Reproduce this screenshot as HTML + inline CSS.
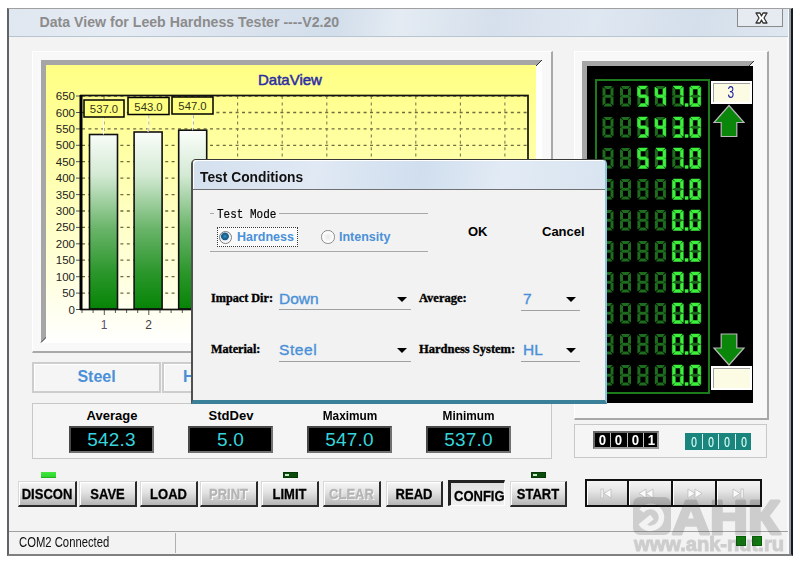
<!DOCTYPE html>
<html><head><meta charset="utf-8">
<style>
*{margin:0;padding:0;box-sizing:border-box}
html,body{width:800px;height:565px;overflow:hidden;background:#fff;font-family:"Liberation Sans",sans-serif}
.a{position:absolute}
#win{left:7px;top:8px;width:786px;height:548px;background:#f3f3f3;border-left:2px solid #606468;border-top:1px solid #a0a0a0;border-right:2px solid #151a20;border-bottom:2px solid #808080;box-shadow:inset -2px 0 0 #9aa0a6,inset -4px 0 0 #fafafa}
#title{left:9px;top:9px;width:779px;height:28px;background:linear-gradient(100deg,#dfe7f0 0%,#e6ecf4 15%,#dae3ee 30%,#d2deeb 42%,#e4ebf3 50%,#d6e0ec 62%,#dfe7f1 75%,#d4dfeb 88%,#dfe7f0 100%);border-bottom:1px solid #b8c4d0}
#title span{position:absolute;left:30.5px;top:5px;font-size:14.15px;font-weight:bold;color:#8c8c8c;white-space:nowrap}
#close{left:737px;top:9px;width:46px;height:18px;border:1px solid #8a8a8a;border-top:none;background:#e6ebf1}
.frame{background:#f8f8f8;border-top:1px solid #fff;border-left:1px solid #fff;border-right:2px solid #a8a8a8;border-bottom:2px solid #a8a8a8}
.pan{background:#f5f5f5;border:1px solid #c8c8c8}
.lbl{font-size:13px;font-weight:bold;color:#000;text-align:center;white-space:nowrap}
.stat{background:#000;border:2px solid #484848;border-right-color:#707070;border-bottom-color:#707070;color:#36d4dc;font-size:19px;text-align:center;line-height:23px;letter-spacing:0.2px}
.btn{height:26px;background:linear-gradient(#f6f6f6,#e2e2e2 45%,#b6b6b6);border-top:1px solid #d8d8d8;border-left:1px solid #d8d8d8;border-right:2px solid #2a2a2a;border-bottom:2px solid #2a2a2a;box-shadow:inset 1px 1px 0 #fff;font-size:13px;font-weight:bold;text-align:center;line-height:24px;color:#000}
.btn span{display:inline-block;transform:scaleY(1.18);-webkit-text-stroke:0.25px #000}
.dis span{-webkit-text-stroke:0.25px #b4b4b4;text-shadow:1px 1px 0 #fff}
.prs{background:linear-gradient(#e0e0e0,#f0f0f0);border-top:3px solid #222;border-left:3px solid #222;border-right:1px solid #fff;border-bottom:1px solid #fff;box-shadow:none}
.dis{color:#b4b4b4}
.cnt{width:15px;height:18px;font-size:15px;font-weight:bold;text-align:center;line-height:18px;transform:scaleX(0.88)}
.cnt2{width:16px;height:17px;font-size:14px;text-align:center;line-height:18px;color:#d8fff8;transform:scaleX(0.72);-webkit-text-stroke:0.2px #d8fff8}
.navb{height:24px;background:linear-gradient(#f4f4f4,#e6e6e6 40%,#bcbcbc);border-left:1px solid #fff}
</style></head><body>
<div id="win" class="a"></div>
<div id="title" class="a"><span>Data View for Leeb Hardness Tester ----V2.20</span></div>
<div id="close" class="a"><svg width="46" height="18" style="position:absolute;left:0;top:0"><path d="M18 4 L22 4 L23.5 7 L25 4 L29 4 L26 9 L29 14 L25 14 L23.5 11 L22 14 L18 14 L21 9 Z" fill="#fff" stroke="#333" stroke-width="1.3" stroke-linejoin="round"/></svg></div>

<!-- chart frame -->
<div class="a frame" style="left:32px;top:51px;width:521px;height:302px"></div>
<div class="a" style="left:41px;top:60px;width:501px;height:283px;background:#fff"></div>
<svg class="a" style="left:0;top:0" width="800" height="565"><polygon points="41,60 542,60 536.5,65.5 46.5,65.5 46.5,337 41,342.5" fill="#a6a6a6"/><line x1="536" y1="66" x2="542" y2="60" stroke="#333" stroke-width="1"/><line x1="41" y1="342.5" x2="46.5" y2="337" stroke="#333" stroke-width="1"/></svg>
<div class="a" style="left:46px;top:65px;width:490px;height:278px;background:linear-gradient(#ffff84 0%,#ffff90 12%,#ffffa4 30%,#ffffc4 55%,#ffffe4 80%,#ffffff 100%)"></div>
<div class="a" style="left:258px;top:71px;font-size:15px;color:#2c2ca4;-webkit-text-stroke:0.5px #2c2ca4">DataView</div>
<svg class="a" style="left:0;top:0" width="800" height="565">
<defs><linearGradient id="bg" x1="0" y1="0" x2="0" y2="1"><stop offset="0" stop-color="#ffff78"/><stop offset="0.25" stop-color="#ffff90"/><stop offset="0.55" stop-color="#ffffc0"/><stop offset="0.85" stop-color="#fffff0"/><stop offset="1" stop-color="#ffffff"/></linearGradient>
<linearGradient id="bar" gradientUnits="userSpaceOnUse" x1="0" y1="130" x2="0" y2="309"><stop offset="0" stop-color="#fcfefc"/><stop offset="0.25" stop-color="#d4ead4"/><stop offset="0.55" stop-color="#6ab46a"/><stop offset="0.8" stop-color="#2a962a"/><stop offset="1" stop-color="#068406"/></linearGradient></defs>
<line x1="82" y1="293.1" x2="527" y2="293.1" stroke="#6c6c3c" stroke-width="1.3" stroke-dasharray="3,3.4"/>
<line x1="82" y1="276.7" x2="527" y2="276.7" stroke="#6c6c3c" stroke-width="1.3" stroke-dasharray="3,3.4"/>
<line x1="82" y1="260.2" x2="527" y2="260.2" stroke="#6c6c3c" stroke-width="1.3" stroke-dasharray="3,3.4"/>
<line x1="82" y1="243.8" x2="527" y2="243.8" stroke="#6c6c3c" stroke-width="1.3" stroke-dasharray="3,3.4"/>
<line x1="82" y1="227.4" x2="527" y2="227.4" stroke="#6c6c3c" stroke-width="1.3" stroke-dasharray="3,3.4"/>
<line x1="82" y1="211.0" x2="527" y2="211.0" stroke="#6c6c3c" stroke-width="1.3" stroke-dasharray="3,3.4"/>
<line x1="82" y1="194.6" x2="527" y2="194.6" stroke="#6c6c3c" stroke-width="1.3" stroke-dasharray="3,3.4"/>
<line x1="82" y1="178.1" x2="527" y2="178.1" stroke="#6c6c3c" stroke-width="1.3" stroke-dasharray="3,3.4"/>
<line x1="82" y1="161.7" x2="527" y2="161.7" stroke="#6c6c3c" stroke-width="1.3" stroke-dasharray="3,3.4"/>
<line x1="82" y1="145.3" x2="527" y2="145.3" stroke="#6c6c3c" stroke-width="1.3" stroke-dasharray="3,3.4"/>
<line x1="82" y1="128.9" x2="527" y2="128.9" stroke="#6c6c3c" stroke-width="1.3" stroke-dasharray="3,3.4"/>
<line x1="82" y1="112.5" x2="527" y2="112.5" stroke="#6c6c3c" stroke-width="1.3" stroke-dasharray="3,3.4"/>
<line x1="82" y1="96.0" x2="527" y2="96.0" stroke="#6c6c3c" stroke-width="1.3" stroke-dasharray="3,3.4"/>
<line x1="104.0" y1="96" x2="104.0" y2="309" stroke="#7c7c50" stroke-width="1.1" stroke-dasharray="3,3.4"/>
<line x1="148.6" y1="96" x2="148.6" y2="309" stroke="#7c7c50" stroke-width="1.1" stroke-dasharray="3,3.4"/>
<line x1="193.1" y1="96" x2="193.1" y2="309" stroke="#7c7c50" stroke-width="1.1" stroke-dasharray="3,3.4"/>
<line x1="237.6" y1="96" x2="237.6" y2="309" stroke="#7c7c50" stroke-width="1.1" stroke-dasharray="3,3.4"/>
<line x1="282.2" y1="96" x2="282.2" y2="309" stroke="#7c7c50" stroke-width="1.1" stroke-dasharray="3,3.4"/>
<line x1="326.8" y1="96" x2="326.8" y2="309" stroke="#7c7c50" stroke-width="1.1" stroke-dasharray="3,3.4"/>
<line x1="371.3" y1="96" x2="371.3" y2="309" stroke="#7c7c50" stroke-width="1.1" stroke-dasharray="3,3.4"/>
<line x1="415.8" y1="96" x2="415.8" y2="309" stroke="#7c7c50" stroke-width="1.1" stroke-dasharray="3,3.4"/>
<line x1="460.4" y1="96" x2="460.4" y2="309" stroke="#7c7c50" stroke-width="1.1" stroke-dasharray="3,3.4"/>
<line x1="504.9" y1="96" x2="504.9" y2="309" stroke="#7c7c50" stroke-width="1.1" stroke-dasharray="3,3.4"/>
<line x1="76" y1="309.5" x2="80" y2="309.5" stroke="#555" stroke-width="1"/>
<text x="75" y="313.5" text-anchor="end" font-size="11.5" fill="#222">0</text>
<line x1="76" y1="293.1" x2="80" y2="293.1" stroke="#555" stroke-width="1"/>
<text x="75" y="297.1" text-anchor="end" font-size="11.5" fill="#222">50</text>
<line x1="76" y1="276.7" x2="80" y2="276.7" stroke="#555" stroke-width="1"/>
<text x="75" y="280.7" text-anchor="end" font-size="11.5" fill="#222">100</text>
<line x1="76" y1="260.2" x2="80" y2="260.2" stroke="#555" stroke-width="1"/>
<text x="75" y="264.2" text-anchor="end" font-size="11.5" fill="#222">150</text>
<line x1="76" y1="243.8" x2="80" y2="243.8" stroke="#555" stroke-width="1"/>
<text x="75" y="247.8" text-anchor="end" font-size="11.5" fill="#222">200</text>
<line x1="76" y1="227.4" x2="80" y2="227.4" stroke="#555" stroke-width="1"/>
<text x="75" y="231.4" text-anchor="end" font-size="11.5" fill="#222">250</text>
<line x1="76" y1="211.0" x2="80" y2="211.0" stroke="#555" stroke-width="1"/>
<text x="75" y="215.0" text-anchor="end" font-size="11.5" fill="#222">300</text>
<line x1="76" y1="194.6" x2="80" y2="194.6" stroke="#555" stroke-width="1"/>
<text x="75" y="198.6" text-anchor="end" font-size="11.5" fill="#222">350</text>
<line x1="76" y1="178.1" x2="80" y2="178.1" stroke="#555" stroke-width="1"/>
<text x="75" y="182.1" text-anchor="end" font-size="11.5" fill="#222">400</text>
<line x1="76" y1="161.7" x2="80" y2="161.7" stroke="#555" stroke-width="1"/>
<text x="75" y="165.7" text-anchor="end" font-size="11.5" fill="#222">450</text>
<line x1="76" y1="145.3" x2="80" y2="145.3" stroke="#555" stroke-width="1"/>
<text x="75" y="149.3" text-anchor="end" font-size="11.5" fill="#222">500</text>
<line x1="76" y1="128.9" x2="80" y2="128.9" stroke="#555" stroke-width="1"/>
<text x="75" y="132.9" text-anchor="end" font-size="11.5" fill="#222">550</text>
<line x1="76" y1="112.5" x2="80" y2="112.5" stroke="#555" stroke-width="1"/>
<text x="75" y="116.5" text-anchor="end" font-size="11.5" fill="#222">600</text>
<line x1="76" y1="96.0" x2="80" y2="96.0" stroke="#555" stroke-width="1"/>
<text x="75" y="100.0" text-anchor="end" font-size="11.5" fill="#222">650</text>
<line x1="82.0" y1="310" x2="82.0" y2="313" stroke="#555" stroke-width="1"/>
<line x1="93.1" y1="310" x2="93.1" y2="313" stroke="#555" stroke-width="1"/>
<line x1="104.3" y1="310" x2="104.3" y2="315" stroke="#555" stroke-width="1"/>
<line x1="115.4" y1="310" x2="115.4" y2="313" stroke="#555" stroke-width="1"/>
<line x1="126.6" y1="310" x2="126.6" y2="313" stroke="#555" stroke-width="1"/>
<line x1="137.7" y1="310" x2="137.7" y2="313" stroke="#555" stroke-width="1"/>
<line x1="148.8" y1="310" x2="148.8" y2="315" stroke="#555" stroke-width="1"/>
<line x1="160.0" y1="310" x2="160.0" y2="313" stroke="#555" stroke-width="1"/>
<line x1="171.1" y1="310" x2="171.1" y2="313" stroke="#555" stroke-width="1"/>
<line x1="182.3" y1="310" x2="182.3" y2="313" stroke="#555" stroke-width="1"/>
<line x1="193.4" y1="310" x2="193.4" y2="315" stroke="#555" stroke-width="1"/>
<line x1="204.5" y1="310" x2="204.5" y2="313" stroke="#555" stroke-width="1"/>
<line x1="215.7" y1="310" x2="215.7" y2="313" stroke="#555" stroke-width="1"/>
<line x1="226.8" y1="310" x2="226.8" y2="313" stroke="#555" stroke-width="1"/>
<line x1="238.0" y1="310" x2="238.0" y2="315" stroke="#555" stroke-width="1"/>
<line x1="249.1" y1="310" x2="249.1" y2="313" stroke="#555" stroke-width="1"/>
<line x1="260.2" y1="310" x2="260.2" y2="313" stroke="#555" stroke-width="1"/>
<line x1="271.4" y1="310" x2="271.4" y2="313" stroke="#555" stroke-width="1"/>
<line x1="282.5" y1="310" x2="282.5" y2="315" stroke="#555" stroke-width="1"/>
<line x1="293.7" y1="310" x2="293.7" y2="313" stroke="#555" stroke-width="1"/>
<line x1="304.8" y1="310" x2="304.8" y2="313" stroke="#555" stroke-width="1"/>
<line x1="315.9" y1="310" x2="315.9" y2="313" stroke="#555" stroke-width="1"/>
<line x1="327.1" y1="310" x2="327.1" y2="315" stroke="#555" stroke-width="1"/>
<line x1="338.2" y1="310" x2="338.2" y2="313" stroke="#555" stroke-width="1"/>
<line x1="349.4" y1="310" x2="349.4" y2="313" stroke="#555" stroke-width="1"/>
<line x1="360.5" y1="310" x2="360.5" y2="313" stroke="#555" stroke-width="1"/>
<line x1="371.6" y1="310" x2="371.6" y2="315" stroke="#555" stroke-width="1"/>
<line x1="382.8" y1="310" x2="382.8" y2="313" stroke="#555" stroke-width="1"/>
<line x1="393.9" y1="310" x2="393.9" y2="313" stroke="#555" stroke-width="1"/>
<line x1="405.1" y1="310" x2="405.1" y2="313" stroke="#555" stroke-width="1"/>
<line x1="416.2" y1="310" x2="416.2" y2="315" stroke="#555" stroke-width="1"/>
<line x1="427.3" y1="310" x2="427.3" y2="313" stroke="#555" stroke-width="1"/>
<line x1="438.5" y1="310" x2="438.5" y2="313" stroke="#555" stroke-width="1"/>
<line x1="449.6" y1="310" x2="449.6" y2="313" stroke="#555" stroke-width="1"/>
<line x1="460.8" y1="310" x2="460.8" y2="315" stroke="#555" stroke-width="1"/>
<line x1="471.9" y1="310" x2="471.9" y2="313" stroke="#555" stroke-width="1"/>
<line x1="483.0" y1="310" x2="483.0" y2="313" stroke="#555" stroke-width="1"/>
<line x1="494.2" y1="310" x2="494.2" y2="313" stroke="#555" stroke-width="1"/>
<line x1="505.3" y1="310" x2="505.3" y2="315" stroke="#555" stroke-width="1"/>
<line x1="516.5" y1="310" x2="516.5" y2="313" stroke="#555" stroke-width="1"/>
<text x="104" y="329" text-anchor="middle" font-size="12" fill="#605070">1</text>
<text x="148.5" y="329" text-anchor="middle" font-size="12" fill="#404040">2</text>
<rect x="89.5" y="134.5" width="28" height="174.5" fill="url(#bar)" stroke="#111" stroke-width="1.6"/>
<rect x="134.1" y="132.0" width="28" height="177.0" fill="url(#bar)" stroke="#111" stroke-width="1.6"/>
<rect x="178.7" y="130.2" width="28" height="178.8" fill="url(#bar)" stroke="#111" stroke-width="1.6"/>
<rect x="81" y="95.5" width="447" height="214" fill="none" stroke="#111" stroke-width="1.7"/>
<line x1="81" y1="95" x2="81" y2="310" stroke="#000" stroke-width="3"/>
<line x1="103.5" y1="117.0" x2="103.5" y2="134.5" stroke="#fff" stroke-width="1"/>
<rect x="84" y="100" width="40" height="17" fill="#ffff80" stroke="#000" stroke-width="1.5"/>
<text x="104.0" y="113.3" text-anchor="middle" font-size="11.3" fill="#34341c">537.0</text>
<line x1="148.1" y1="114.5" x2="148.1" y2="132.0" stroke="#fff" stroke-width="1"/>
<rect x="128" y="97.5" width="41" height="17" fill="#ffff80" stroke="#000" stroke-width="1.5"/>
<text x="148.5" y="110.8" text-anchor="middle" font-size="11.3" fill="#34341c">543.0</text>
<line x1="192.7" y1="114.0" x2="192.7" y2="130.2" stroke="#fff" stroke-width="1"/>
<rect x="172" y="97" width="41" height="17" fill="#ffff80" stroke="#000" stroke-width="1.5"/>
<text x="192.5" y="110.3" text-anchor="middle" font-size="11.3" fill="#34341c">547.0</text>
</svg>

<!-- tabs -->
<div class="a pan" style="left:32px;top:362px;width:129px;height:31px;color:#4a90d8;font-size:16px;font-weight:bold;text-align:center;line-height:25px;border:2px solid #cdcdcd;box-shadow:inset 1px 1px 0 #fff">Steel</div>
<div class="a pan" style="left:162px;top:362px;width:129px;height:31px;color:#4a90d8;font-size:16px;font-weight:bold;line-height:25px;padding-left:19px;border:2px solid #cdcdcd;box-shadow:inset 1px 1px 0 #fff">HL</div>

<!-- stats -->
<div class="a pan" style="left:32px;top:403px;width:520px;height:56px"></div>
<div class="a lbl" style="left:62px;top:408px;width:100px">Average</div>
<div class="a stat" style="left:69px;top:426px;width:85px;height:27px">542.3</div>
<div class="a lbl" style="left:181px;top:408px;width:100px">StdDev</div>
<div class="a stat" style="left:188px;top:426px;width:85px;height:27px">5.0</div>
<div class="a lbl" style="left:300px;top:408px;width:100px"><span style="display:inline-block;transform:scaleX(0.91)">Maximum</span></div>
<div class="a stat" style="left:307px;top:426px;width:85px;height:27px">547.0</div>
<div class="a lbl" style="left:419px;top:408px;width:100px"><span style="display:inline-block;transform:scaleX(0.91)">Minimum</span></div>
<div class="a stat" style="left:426px;top:426px;width:85px;height:27px">537.0</div>

<!-- LCD frame -->
<div class="a frame" style="left:574px;top:51px;width:195px;height:369px"></div>
<svg class="a" style="left:0;top:0" width="800" height="565"><polygon points="582,61 754,61 748.5,66.5 587.5,66.5 587.5,398 582,403.5" fill="#a6a6a6"/><line x1="748" y1="67" x2="754" y2="61" stroke="#333" stroke-width="1"/></svg>
<div class="a" style="left:587px;top:66px;width:166px;height:337px;background:#000"></div>
<div class="a" style="left:594.5px;top:78.5px;width:115px;height:315.5px;border:2.5px solid #1c7c1c"></div>
<div class="a" style="left:710.5px;top:81px;width:41px;height:23px;background:#fcfce4;border:2px solid #fff;box-shadow:inset 1px 1px 0 #a0a0a0;color:#2020a0;font-size:14px;text-align:center;line-height:19px"><span style="display:inline-block;transform:scale(0.85,1.12)">3</span></div>
<div class="a" style="left:710.5px;top:366px;width:41px;height:23.5px;background:#fcfce4;border:2px solid #fff;box-shadow:inset 1px 1px 0 #a0a0a0"></div>

<svg class="a" style="left:0;top:0" width="800" height="565">
<polygon points="603.4,86.0 612.6,86.0 610.2,89.0 605.8,89.0" fill="#1e6c1e"/>
<polygon points="603.4,106.5 612.6,106.5 610.2,103.5 605.8,103.5" fill="#1e6c1e"/>
<polygon points="602.5,87.0 605.5,89.0 605.5,95.0 602.5,96.0" fill="#1e6c1e"/>
<polygon points="602.5,96.5 605.5,97.5 605.5,103.5 602.5,105.5" fill="#1e6c1e"/>
<polygon points="613.5,87.0 610.5,89.0 610.5,95.0 613.5,96.0" fill="#1e6c1e"/>
<polygon points="613.5,96.5 610.5,97.5 610.5,103.5 613.5,105.5" fill="#1e6c1e"/>
<polygon points="603.2,96.2 605.5,94.8 610.5,94.8 612.8,96.2 610.5,97.8 605.5,97.8" fill="#1e6c1e"/>
<polygon points="620.9,86.0 630.1,86.0 627.7,89.0 623.2,89.0" fill="#1e6c1e"/>
<polygon points="620.9,106.5 630.1,106.5 627.7,103.5 623.2,103.5" fill="#1e6c1e"/>
<polygon points="620.0,87.0 623.0,89.0 623.0,95.0 620.0,96.0" fill="#1e6c1e"/>
<polygon points="620.0,96.5 623.0,97.5 623.0,103.5 620.0,105.5" fill="#1e6c1e"/>
<polygon points="631.0,87.0 628.0,89.0 628.0,95.0 631.0,96.0" fill="#1e6c1e"/>
<polygon points="631.0,96.5 628.0,97.5 628.0,103.5 631.0,105.5" fill="#1e6c1e"/>
<polygon points="620.7,96.2 623.0,94.8 628.0,94.8 630.2,96.2 628.0,97.8 623.0,97.8" fill="#1e6c1e"/>
<polygon points="638.3,86.0 647.5,86.0 645.1,89.0 640.7,89.0" fill="#3ef03e" stroke="#3ef03e" stroke-width="0.5" stroke-linejoin="round"/>
<polygon points="638.3,106.5 647.5,106.5 645.1,103.5 640.7,103.5" fill="#3ef03e" stroke="#3ef03e" stroke-width="0.5" stroke-linejoin="round"/>
<polygon points="637.4,87.0 640.4,89.0 640.4,95.0 637.4,96.0" fill="#3ef03e" stroke="#3ef03e" stroke-width="0.5" stroke-linejoin="round"/>
<polygon points="637.4,96.5 640.4,97.5 640.4,103.5 637.4,105.5" fill="#1e6c1e"/>
<polygon points="648.4,87.0 645.4,89.0 645.4,95.0 648.4,96.0" fill="#1e6c1e"/>
<polygon points="648.4,96.5 645.4,97.5 645.4,103.5 648.4,105.5" fill="#3ef03e" stroke="#3ef03e" stroke-width="0.5" stroke-linejoin="round"/>
<polygon points="638.1,96.2 640.4,94.8 645.4,94.8 647.7,96.2 645.4,97.8 640.4,97.8" fill="#3ef03e" stroke="#3ef03e" stroke-width="0.5" stroke-linejoin="round"/>
<polygon points="655.8,86.0 665.0,86.0 662.6,89.0 658.1,89.0" fill="#1e6c1e"/>
<polygon points="655.8,106.5 665.0,106.5 662.6,103.5 658.1,103.5" fill="#1e6c1e"/>
<polygon points="654.9,87.0 657.9,89.0 657.9,95.0 654.9,96.0" fill="#3ef03e" stroke="#3ef03e" stroke-width="0.5" stroke-linejoin="round"/>
<polygon points="654.9,96.5 657.9,97.5 657.9,103.5 654.9,105.5" fill="#1e6c1e"/>
<polygon points="665.9,87.0 662.9,89.0 662.9,95.0 665.9,96.0" fill="#3ef03e" stroke="#3ef03e" stroke-width="0.5" stroke-linejoin="round"/>
<polygon points="665.9,96.5 662.9,97.5 662.9,103.5 665.9,105.5" fill="#3ef03e" stroke="#3ef03e" stroke-width="0.5" stroke-linejoin="round"/>
<polygon points="655.6,96.2 657.9,94.8 662.9,94.8 665.1,96.2 662.9,97.8 657.9,97.8" fill="#3ef03e" stroke="#3ef03e" stroke-width="0.5" stroke-linejoin="round"/>
<polygon points="673.2,86.0 682.4,86.0 680.0,89.0 675.6,89.0" fill="#3ef03e" stroke="#3ef03e" stroke-width="0.5" stroke-linejoin="round"/>
<polygon points="673.2,106.5 682.4,106.5 680.0,103.5 675.6,103.5" fill="#1e6c1e"/>
<polygon points="672.3,87.0 675.3,89.0 675.3,95.0 672.3,96.0" fill="#1e6c1e"/>
<polygon points="672.3,96.5 675.3,97.5 675.3,103.5 672.3,105.5" fill="#1e6c1e"/>
<polygon points="683.3,87.0 680.3,89.0 680.3,95.0 683.3,96.0" fill="#3ef03e" stroke="#3ef03e" stroke-width="0.5" stroke-linejoin="round"/>
<polygon points="683.3,96.5 680.3,97.5 680.3,103.5 683.3,105.5" fill="#3ef03e" stroke="#3ef03e" stroke-width="0.5" stroke-linejoin="round"/>
<polygon points="673.0,96.2 675.3,94.8 680.3,94.8 682.6,96.2 680.3,97.8 675.3,97.8" fill="#1e6c1e"/>
<polygon points="690.6,86.0 699.9,86.0 697.5,89.0 693.0,89.0" fill="#3ef03e" stroke="#3ef03e" stroke-width="0.5" stroke-linejoin="round"/>
<polygon points="690.6,106.5 699.9,106.5 697.5,103.5 693.0,103.5" fill="#3ef03e" stroke="#3ef03e" stroke-width="0.5" stroke-linejoin="round"/>
<polygon points="689.8,87.0 692.8,89.0 692.8,95.0 689.8,96.0" fill="#3ef03e" stroke="#3ef03e" stroke-width="0.5" stroke-linejoin="round"/>
<polygon points="689.8,96.5 692.8,97.5 692.8,103.5 689.8,105.5" fill="#3ef03e" stroke="#3ef03e" stroke-width="0.5" stroke-linejoin="round"/>
<polygon points="700.8,87.0 697.8,89.0 697.8,95.0 700.8,96.0" fill="#3ef03e" stroke="#3ef03e" stroke-width="0.5" stroke-linejoin="round"/>
<polygon points="700.8,96.5 697.8,97.5 697.8,103.5 700.8,105.5" fill="#3ef03e" stroke="#3ef03e" stroke-width="0.5" stroke-linejoin="round"/>
<polygon points="690.5,96.2 692.8,94.8 697.8,94.8 700.0,96.2 697.8,97.8 692.8,97.8" fill="#1e6c1e"/>
<rect x="684.8" y="103.3" width="3.6" height="3.4" fill="#3ef03e"/>
<polygon points="603.4,117.0 612.6,117.0 610.2,120.0 605.8,120.0" fill="#1e6c1e"/>
<polygon points="603.4,137.5 612.6,137.5 610.2,134.5 605.8,134.5" fill="#1e6c1e"/>
<polygon points="602.5,118.0 605.5,120.0 605.5,126.0 602.5,127.0" fill="#1e6c1e"/>
<polygon points="602.5,127.5 605.5,128.6 605.5,134.5 602.5,136.5" fill="#1e6c1e"/>
<polygon points="613.5,118.0 610.5,120.0 610.5,126.0 613.5,127.0" fill="#1e6c1e"/>
<polygon points="613.5,127.5 610.5,128.6 610.5,134.5 613.5,136.5" fill="#1e6c1e"/>
<polygon points="603.2,127.2 605.5,125.8 610.5,125.8 612.8,127.2 610.5,128.8 605.5,128.8" fill="#1e6c1e"/>
<polygon points="620.9,117.0 630.1,117.0 627.7,120.0 623.2,120.0" fill="#1e6c1e"/>
<polygon points="620.9,137.5 630.1,137.5 627.7,134.5 623.2,134.5" fill="#1e6c1e"/>
<polygon points="620.0,118.0 623.0,120.0 623.0,126.0 620.0,127.0" fill="#1e6c1e"/>
<polygon points="620.0,127.5 623.0,128.6 623.0,134.5 620.0,136.5" fill="#1e6c1e"/>
<polygon points="631.0,118.0 628.0,120.0 628.0,126.0 631.0,127.0" fill="#1e6c1e"/>
<polygon points="631.0,127.5 628.0,128.6 628.0,134.5 631.0,136.5" fill="#1e6c1e"/>
<polygon points="620.7,127.2 623.0,125.8 628.0,125.8 630.2,127.2 628.0,128.8 623.0,128.8" fill="#1e6c1e"/>
<polygon points="638.3,117.0 647.5,117.0 645.1,120.0 640.7,120.0" fill="#3ef03e" stroke="#3ef03e" stroke-width="0.5" stroke-linejoin="round"/>
<polygon points="638.3,137.5 647.5,137.5 645.1,134.5 640.7,134.5" fill="#3ef03e" stroke="#3ef03e" stroke-width="0.5" stroke-linejoin="round"/>
<polygon points="637.4,118.0 640.4,120.0 640.4,126.0 637.4,127.0" fill="#3ef03e" stroke="#3ef03e" stroke-width="0.5" stroke-linejoin="round"/>
<polygon points="637.4,127.5 640.4,128.6 640.4,134.5 637.4,136.5" fill="#1e6c1e"/>
<polygon points="648.4,118.0 645.4,120.0 645.4,126.0 648.4,127.0" fill="#1e6c1e"/>
<polygon points="648.4,127.5 645.4,128.6 645.4,134.5 648.4,136.5" fill="#3ef03e" stroke="#3ef03e" stroke-width="0.5" stroke-linejoin="round"/>
<polygon points="638.1,127.2 640.4,125.8 645.4,125.8 647.7,127.2 645.4,128.8 640.4,128.8" fill="#3ef03e" stroke="#3ef03e" stroke-width="0.5" stroke-linejoin="round"/>
<polygon points="655.8,117.0 665.0,117.0 662.6,120.0 658.1,120.0" fill="#1e6c1e"/>
<polygon points="655.8,137.5 665.0,137.5 662.6,134.5 658.1,134.5" fill="#1e6c1e"/>
<polygon points="654.9,118.0 657.9,120.0 657.9,126.0 654.9,127.0" fill="#3ef03e" stroke="#3ef03e" stroke-width="0.5" stroke-linejoin="round"/>
<polygon points="654.9,127.5 657.9,128.6 657.9,134.5 654.9,136.5" fill="#1e6c1e"/>
<polygon points="665.9,118.0 662.9,120.0 662.9,126.0 665.9,127.0" fill="#3ef03e" stroke="#3ef03e" stroke-width="0.5" stroke-linejoin="round"/>
<polygon points="665.9,127.5 662.9,128.6 662.9,134.5 665.9,136.5" fill="#3ef03e" stroke="#3ef03e" stroke-width="0.5" stroke-linejoin="round"/>
<polygon points="655.6,127.2 657.9,125.8 662.9,125.8 665.1,127.2 662.9,128.8 657.9,128.8" fill="#3ef03e" stroke="#3ef03e" stroke-width="0.5" stroke-linejoin="round"/>
<polygon points="673.2,117.0 682.4,117.0 680.0,120.0 675.6,120.0" fill="#3ef03e" stroke="#3ef03e" stroke-width="0.5" stroke-linejoin="round"/>
<polygon points="673.2,137.5 682.4,137.5 680.0,134.5 675.6,134.5" fill="#3ef03e" stroke="#3ef03e" stroke-width="0.5" stroke-linejoin="round"/>
<polygon points="672.3,118.0 675.3,120.0 675.3,126.0 672.3,127.0" fill="#1e6c1e"/>
<polygon points="672.3,127.5 675.3,128.6 675.3,134.5 672.3,136.5" fill="#1e6c1e"/>
<polygon points="683.3,118.0 680.3,120.0 680.3,126.0 683.3,127.0" fill="#3ef03e" stroke="#3ef03e" stroke-width="0.5" stroke-linejoin="round"/>
<polygon points="683.3,127.5 680.3,128.6 680.3,134.5 683.3,136.5" fill="#3ef03e" stroke="#3ef03e" stroke-width="0.5" stroke-linejoin="round"/>
<polygon points="673.0,127.2 675.3,125.8 680.3,125.8 682.6,127.2 680.3,128.8 675.3,128.8" fill="#3ef03e" stroke="#3ef03e" stroke-width="0.5" stroke-linejoin="round"/>
<polygon points="690.6,117.0 699.9,117.0 697.5,120.0 693.0,120.0" fill="#3ef03e" stroke="#3ef03e" stroke-width="0.5" stroke-linejoin="round"/>
<polygon points="690.6,137.5 699.9,137.5 697.5,134.5 693.0,134.5" fill="#3ef03e" stroke="#3ef03e" stroke-width="0.5" stroke-linejoin="round"/>
<polygon points="689.8,118.0 692.8,120.0 692.8,126.0 689.8,127.0" fill="#3ef03e" stroke="#3ef03e" stroke-width="0.5" stroke-linejoin="round"/>
<polygon points="689.8,127.5 692.8,128.6 692.8,134.5 689.8,136.5" fill="#3ef03e" stroke="#3ef03e" stroke-width="0.5" stroke-linejoin="round"/>
<polygon points="700.8,118.0 697.8,120.0 697.8,126.0 700.8,127.0" fill="#3ef03e" stroke="#3ef03e" stroke-width="0.5" stroke-linejoin="round"/>
<polygon points="700.8,127.5 697.8,128.6 697.8,134.5 700.8,136.5" fill="#3ef03e" stroke="#3ef03e" stroke-width="0.5" stroke-linejoin="round"/>
<polygon points="690.5,127.2 692.8,125.8 697.8,125.8 700.0,127.2 697.8,128.8 692.8,128.8" fill="#1e6c1e"/>
<rect x="684.8" y="134.3" width="3.6" height="3.4" fill="#3ef03e"/>
<polygon points="603.4,148.0 612.6,148.0 610.2,151.0 605.8,151.0" fill="#1e6c1e"/>
<polygon points="603.4,168.5 612.6,168.5 610.2,165.5 605.8,165.5" fill="#1e6c1e"/>
<polygon points="602.5,149.0 605.5,151.0 605.5,156.9 602.5,157.9" fill="#1e6c1e"/>
<polygon points="602.5,158.6 605.5,159.6 605.5,165.5 602.5,167.5" fill="#1e6c1e"/>
<polygon points="613.5,149.0 610.5,151.0 610.5,156.9 613.5,157.9" fill="#1e6c1e"/>
<polygon points="613.5,158.6 610.5,159.6 610.5,165.5 613.5,167.5" fill="#1e6c1e"/>
<polygon points="603.2,158.2 605.5,156.8 610.5,156.8 612.8,158.2 610.5,159.8 605.5,159.8" fill="#1e6c1e"/>
<polygon points="620.9,148.0 630.1,148.0 627.7,151.0 623.2,151.0" fill="#1e6c1e"/>
<polygon points="620.9,168.5 630.1,168.5 627.7,165.5 623.2,165.5" fill="#1e6c1e"/>
<polygon points="620.0,149.0 623.0,151.0 623.0,156.9 620.0,157.9" fill="#1e6c1e"/>
<polygon points="620.0,158.6 623.0,159.6 623.0,165.5 620.0,167.5" fill="#1e6c1e"/>
<polygon points="631.0,149.0 628.0,151.0 628.0,156.9 631.0,157.9" fill="#1e6c1e"/>
<polygon points="631.0,158.6 628.0,159.6 628.0,165.5 631.0,167.5" fill="#1e6c1e"/>
<polygon points="620.7,158.2 623.0,156.8 628.0,156.8 630.2,158.2 628.0,159.8 623.0,159.8" fill="#1e6c1e"/>
<polygon points="638.3,148.0 647.5,148.0 645.1,151.0 640.7,151.0" fill="#3ef03e" stroke="#3ef03e" stroke-width="0.5" stroke-linejoin="round"/>
<polygon points="638.3,168.5 647.5,168.5 645.1,165.5 640.7,165.5" fill="#3ef03e" stroke="#3ef03e" stroke-width="0.5" stroke-linejoin="round"/>
<polygon points="637.4,149.0 640.4,151.0 640.4,156.9 637.4,157.9" fill="#3ef03e" stroke="#3ef03e" stroke-width="0.5" stroke-linejoin="round"/>
<polygon points="637.4,158.6 640.4,159.6 640.4,165.5 637.4,167.5" fill="#1e6c1e"/>
<polygon points="648.4,149.0 645.4,151.0 645.4,156.9 648.4,157.9" fill="#1e6c1e"/>
<polygon points="648.4,158.6 645.4,159.6 645.4,165.5 648.4,167.5" fill="#3ef03e" stroke="#3ef03e" stroke-width="0.5" stroke-linejoin="round"/>
<polygon points="638.1,158.2 640.4,156.8 645.4,156.8 647.7,158.2 645.4,159.8 640.4,159.8" fill="#3ef03e" stroke="#3ef03e" stroke-width="0.5" stroke-linejoin="round"/>
<polygon points="655.8,148.0 665.0,148.0 662.6,151.0 658.1,151.0" fill="#3ef03e" stroke="#3ef03e" stroke-width="0.5" stroke-linejoin="round"/>
<polygon points="655.8,168.5 665.0,168.5 662.6,165.5 658.1,165.5" fill="#3ef03e" stroke="#3ef03e" stroke-width="0.5" stroke-linejoin="round"/>
<polygon points="654.9,149.0 657.9,151.0 657.9,156.9 654.9,157.9" fill="#1e6c1e"/>
<polygon points="654.9,158.6 657.9,159.6 657.9,165.5 654.9,167.5" fill="#1e6c1e"/>
<polygon points="665.9,149.0 662.9,151.0 662.9,156.9 665.9,157.9" fill="#3ef03e" stroke="#3ef03e" stroke-width="0.5" stroke-linejoin="round"/>
<polygon points="665.9,158.6 662.9,159.6 662.9,165.5 665.9,167.5" fill="#3ef03e" stroke="#3ef03e" stroke-width="0.5" stroke-linejoin="round"/>
<polygon points="655.6,158.2 657.9,156.8 662.9,156.8 665.1,158.2 662.9,159.8 657.9,159.8" fill="#3ef03e" stroke="#3ef03e" stroke-width="0.5" stroke-linejoin="round"/>
<polygon points="673.2,148.0 682.4,148.0 680.0,151.0 675.6,151.0" fill="#3ef03e" stroke="#3ef03e" stroke-width="0.5" stroke-linejoin="round"/>
<polygon points="673.2,168.5 682.4,168.5 680.0,165.5 675.6,165.5" fill="#1e6c1e"/>
<polygon points="672.3,149.0 675.3,151.0 675.3,156.9 672.3,157.9" fill="#1e6c1e"/>
<polygon points="672.3,158.6 675.3,159.6 675.3,165.5 672.3,167.5" fill="#1e6c1e"/>
<polygon points="683.3,149.0 680.3,151.0 680.3,156.9 683.3,157.9" fill="#3ef03e" stroke="#3ef03e" stroke-width="0.5" stroke-linejoin="round"/>
<polygon points="683.3,158.6 680.3,159.6 680.3,165.5 683.3,167.5" fill="#3ef03e" stroke="#3ef03e" stroke-width="0.5" stroke-linejoin="round"/>
<polygon points="673.0,158.2 675.3,156.8 680.3,156.8 682.6,158.2 680.3,159.8 675.3,159.8" fill="#1e6c1e"/>
<polygon points="690.6,148.0 699.9,148.0 697.5,151.0 693.0,151.0" fill="#3ef03e" stroke="#3ef03e" stroke-width="0.5" stroke-linejoin="round"/>
<polygon points="690.6,168.5 699.9,168.5 697.5,165.5 693.0,165.5" fill="#3ef03e" stroke="#3ef03e" stroke-width="0.5" stroke-linejoin="round"/>
<polygon points="689.8,149.0 692.8,151.0 692.8,156.9 689.8,157.9" fill="#3ef03e" stroke="#3ef03e" stroke-width="0.5" stroke-linejoin="round"/>
<polygon points="689.8,158.6 692.8,159.6 692.8,165.5 689.8,167.5" fill="#3ef03e" stroke="#3ef03e" stroke-width="0.5" stroke-linejoin="round"/>
<polygon points="700.8,149.0 697.8,151.0 697.8,156.9 700.8,157.9" fill="#3ef03e" stroke="#3ef03e" stroke-width="0.5" stroke-linejoin="round"/>
<polygon points="700.8,158.6 697.8,159.6 697.8,165.5 700.8,167.5" fill="#3ef03e" stroke="#3ef03e" stroke-width="0.5" stroke-linejoin="round"/>
<polygon points="690.5,158.2 692.8,156.8 697.8,156.8 700.0,158.2 697.8,159.8 692.8,159.8" fill="#1e6c1e"/>
<rect x="684.8" y="165.3" width="3.6" height="3.4" fill="#3ef03e"/>
<polygon points="603.4,179.0 612.6,179.0 610.2,182.0 605.8,182.0" fill="#1e6c1e"/>
<polygon points="603.4,199.5 612.6,199.5 610.2,196.5 605.8,196.5" fill="#1e6c1e"/>
<polygon points="602.5,180.0 605.5,182.0 605.5,187.9 602.5,188.9" fill="#1e6c1e"/>
<polygon points="602.5,189.6 605.5,190.6 605.5,196.5 602.5,198.5" fill="#1e6c1e"/>
<polygon points="613.5,180.0 610.5,182.0 610.5,187.9 613.5,188.9" fill="#1e6c1e"/>
<polygon points="613.5,189.6 610.5,190.6 610.5,196.5 613.5,198.5" fill="#1e6c1e"/>
<polygon points="603.2,189.2 605.5,187.8 610.5,187.8 612.8,189.2 610.5,190.8 605.5,190.8" fill="#1e6c1e"/>
<polygon points="620.9,179.0 630.1,179.0 627.7,182.0 623.2,182.0" fill="#1e6c1e"/>
<polygon points="620.9,199.5 630.1,199.5 627.7,196.5 623.2,196.5" fill="#1e6c1e"/>
<polygon points="620.0,180.0 623.0,182.0 623.0,187.9 620.0,188.9" fill="#1e6c1e"/>
<polygon points="620.0,189.6 623.0,190.6 623.0,196.5 620.0,198.5" fill="#1e6c1e"/>
<polygon points="631.0,180.0 628.0,182.0 628.0,187.9 631.0,188.9" fill="#1e6c1e"/>
<polygon points="631.0,189.6 628.0,190.6 628.0,196.5 631.0,198.5" fill="#1e6c1e"/>
<polygon points="620.7,189.2 623.0,187.8 628.0,187.8 630.2,189.2 628.0,190.8 623.0,190.8" fill="#1e6c1e"/>
<polygon points="638.3,179.0 647.5,179.0 645.1,182.0 640.7,182.0" fill="#1e6c1e"/>
<polygon points="638.3,199.5 647.5,199.5 645.1,196.5 640.7,196.5" fill="#1e6c1e"/>
<polygon points="637.4,180.0 640.4,182.0 640.4,187.9 637.4,188.9" fill="#1e6c1e"/>
<polygon points="637.4,189.6 640.4,190.6 640.4,196.5 637.4,198.5" fill="#1e6c1e"/>
<polygon points="648.4,180.0 645.4,182.0 645.4,187.9 648.4,188.9" fill="#1e6c1e"/>
<polygon points="648.4,189.6 645.4,190.6 645.4,196.5 648.4,198.5" fill="#1e6c1e"/>
<polygon points="638.1,189.2 640.4,187.8 645.4,187.8 647.7,189.2 645.4,190.8 640.4,190.8" fill="#1e6c1e"/>
<polygon points="655.8,179.0 665.0,179.0 662.6,182.0 658.1,182.0" fill="#1e6c1e"/>
<polygon points="655.8,199.5 665.0,199.5 662.6,196.5 658.1,196.5" fill="#1e6c1e"/>
<polygon points="654.9,180.0 657.9,182.0 657.9,187.9 654.9,188.9" fill="#1e6c1e"/>
<polygon points="654.9,189.6 657.9,190.6 657.9,196.5 654.9,198.5" fill="#1e6c1e"/>
<polygon points="665.9,180.0 662.9,182.0 662.9,187.9 665.9,188.9" fill="#1e6c1e"/>
<polygon points="665.9,189.6 662.9,190.6 662.9,196.5 665.9,198.5" fill="#1e6c1e"/>
<polygon points="655.6,189.2 657.9,187.8 662.9,187.8 665.1,189.2 662.9,190.8 657.9,190.8" fill="#1e6c1e"/>
<polygon points="673.2,179.0 682.4,179.0 680.0,182.0 675.6,182.0" fill="#3ef03e" stroke="#3ef03e" stroke-width="0.5" stroke-linejoin="round"/>
<polygon points="673.2,199.5 682.4,199.5 680.0,196.5 675.6,196.5" fill="#3ef03e" stroke="#3ef03e" stroke-width="0.5" stroke-linejoin="round"/>
<polygon points="672.3,180.0 675.3,182.0 675.3,187.9 672.3,188.9" fill="#3ef03e" stroke="#3ef03e" stroke-width="0.5" stroke-linejoin="round"/>
<polygon points="672.3,189.6 675.3,190.6 675.3,196.5 672.3,198.5" fill="#3ef03e" stroke="#3ef03e" stroke-width="0.5" stroke-linejoin="round"/>
<polygon points="683.3,180.0 680.3,182.0 680.3,187.9 683.3,188.9" fill="#3ef03e" stroke="#3ef03e" stroke-width="0.5" stroke-linejoin="round"/>
<polygon points="683.3,189.6 680.3,190.6 680.3,196.5 683.3,198.5" fill="#3ef03e" stroke="#3ef03e" stroke-width="0.5" stroke-linejoin="round"/>
<polygon points="673.0,189.2 675.3,187.8 680.3,187.8 682.6,189.2 680.3,190.8 675.3,190.8" fill="#1e6c1e"/>
<polygon points="690.6,179.0 699.9,179.0 697.5,182.0 693.0,182.0" fill="#3ef03e" stroke="#3ef03e" stroke-width="0.5" stroke-linejoin="round"/>
<polygon points="690.6,199.5 699.9,199.5 697.5,196.5 693.0,196.5" fill="#3ef03e" stroke="#3ef03e" stroke-width="0.5" stroke-linejoin="round"/>
<polygon points="689.8,180.0 692.8,182.0 692.8,187.9 689.8,188.9" fill="#3ef03e" stroke="#3ef03e" stroke-width="0.5" stroke-linejoin="round"/>
<polygon points="689.8,189.6 692.8,190.6 692.8,196.5 689.8,198.5" fill="#3ef03e" stroke="#3ef03e" stroke-width="0.5" stroke-linejoin="round"/>
<polygon points="700.8,180.0 697.8,182.0 697.8,187.9 700.8,188.9" fill="#3ef03e" stroke="#3ef03e" stroke-width="0.5" stroke-linejoin="round"/>
<polygon points="700.8,189.6 697.8,190.6 697.8,196.5 700.8,198.5" fill="#3ef03e" stroke="#3ef03e" stroke-width="0.5" stroke-linejoin="round"/>
<polygon points="690.5,189.2 692.8,187.8 697.8,187.8 700.0,189.2 697.8,190.8 692.8,190.8" fill="#1e6c1e"/>
<rect x="684.8" y="196.3" width="3.6" height="3.4" fill="#3ef03e"/>
<polygon points="603.4,210.0 612.6,210.0 610.2,213.0 605.8,213.0" fill="#1e6c1e"/>
<polygon points="603.4,230.5 612.6,230.5 610.2,227.5 605.8,227.5" fill="#1e6c1e"/>
<polygon points="602.5,211.0 605.5,213.0 605.5,218.9 602.5,219.9" fill="#1e6c1e"/>
<polygon points="602.5,220.6 605.5,221.6 605.5,227.5 602.5,229.5" fill="#1e6c1e"/>
<polygon points="613.5,211.0 610.5,213.0 610.5,218.9 613.5,219.9" fill="#1e6c1e"/>
<polygon points="613.5,220.6 610.5,221.6 610.5,227.5 613.5,229.5" fill="#1e6c1e"/>
<polygon points="603.2,220.2 605.5,218.8 610.5,218.8 612.8,220.2 610.5,221.8 605.5,221.8" fill="#1e6c1e"/>
<polygon points="620.9,210.0 630.1,210.0 627.7,213.0 623.2,213.0" fill="#1e6c1e"/>
<polygon points="620.9,230.5 630.1,230.5 627.7,227.5 623.2,227.5" fill="#1e6c1e"/>
<polygon points="620.0,211.0 623.0,213.0 623.0,218.9 620.0,219.9" fill="#1e6c1e"/>
<polygon points="620.0,220.6 623.0,221.6 623.0,227.5 620.0,229.5" fill="#1e6c1e"/>
<polygon points="631.0,211.0 628.0,213.0 628.0,218.9 631.0,219.9" fill="#1e6c1e"/>
<polygon points="631.0,220.6 628.0,221.6 628.0,227.5 631.0,229.5" fill="#1e6c1e"/>
<polygon points="620.7,220.2 623.0,218.8 628.0,218.8 630.2,220.2 628.0,221.8 623.0,221.8" fill="#1e6c1e"/>
<polygon points="638.3,210.0 647.5,210.0 645.1,213.0 640.7,213.0" fill="#1e6c1e"/>
<polygon points="638.3,230.5 647.5,230.5 645.1,227.5 640.7,227.5" fill="#1e6c1e"/>
<polygon points="637.4,211.0 640.4,213.0 640.4,218.9 637.4,219.9" fill="#1e6c1e"/>
<polygon points="637.4,220.6 640.4,221.6 640.4,227.5 637.4,229.5" fill="#1e6c1e"/>
<polygon points="648.4,211.0 645.4,213.0 645.4,218.9 648.4,219.9" fill="#1e6c1e"/>
<polygon points="648.4,220.6 645.4,221.6 645.4,227.5 648.4,229.5" fill="#1e6c1e"/>
<polygon points="638.1,220.2 640.4,218.8 645.4,218.8 647.7,220.2 645.4,221.8 640.4,221.8" fill="#1e6c1e"/>
<polygon points="655.8,210.0 665.0,210.0 662.6,213.0 658.1,213.0" fill="#1e6c1e"/>
<polygon points="655.8,230.5 665.0,230.5 662.6,227.5 658.1,227.5" fill="#1e6c1e"/>
<polygon points="654.9,211.0 657.9,213.0 657.9,218.9 654.9,219.9" fill="#1e6c1e"/>
<polygon points="654.9,220.6 657.9,221.6 657.9,227.5 654.9,229.5" fill="#1e6c1e"/>
<polygon points="665.9,211.0 662.9,213.0 662.9,218.9 665.9,219.9" fill="#1e6c1e"/>
<polygon points="665.9,220.6 662.9,221.6 662.9,227.5 665.9,229.5" fill="#1e6c1e"/>
<polygon points="655.6,220.2 657.9,218.8 662.9,218.8 665.1,220.2 662.9,221.8 657.9,221.8" fill="#1e6c1e"/>
<polygon points="673.2,210.0 682.4,210.0 680.0,213.0 675.6,213.0" fill="#3ef03e" stroke="#3ef03e" stroke-width="0.5" stroke-linejoin="round"/>
<polygon points="673.2,230.5 682.4,230.5 680.0,227.5 675.6,227.5" fill="#3ef03e" stroke="#3ef03e" stroke-width="0.5" stroke-linejoin="round"/>
<polygon points="672.3,211.0 675.3,213.0 675.3,218.9 672.3,219.9" fill="#3ef03e" stroke="#3ef03e" stroke-width="0.5" stroke-linejoin="round"/>
<polygon points="672.3,220.6 675.3,221.6 675.3,227.5 672.3,229.5" fill="#3ef03e" stroke="#3ef03e" stroke-width="0.5" stroke-linejoin="round"/>
<polygon points="683.3,211.0 680.3,213.0 680.3,218.9 683.3,219.9" fill="#3ef03e" stroke="#3ef03e" stroke-width="0.5" stroke-linejoin="round"/>
<polygon points="683.3,220.6 680.3,221.6 680.3,227.5 683.3,229.5" fill="#3ef03e" stroke="#3ef03e" stroke-width="0.5" stroke-linejoin="round"/>
<polygon points="673.0,220.2 675.3,218.8 680.3,218.8 682.6,220.2 680.3,221.8 675.3,221.8" fill="#1e6c1e"/>
<polygon points="690.6,210.0 699.9,210.0 697.5,213.0 693.0,213.0" fill="#3ef03e" stroke="#3ef03e" stroke-width="0.5" stroke-linejoin="round"/>
<polygon points="690.6,230.5 699.9,230.5 697.5,227.5 693.0,227.5" fill="#3ef03e" stroke="#3ef03e" stroke-width="0.5" stroke-linejoin="round"/>
<polygon points="689.8,211.0 692.8,213.0 692.8,218.9 689.8,219.9" fill="#3ef03e" stroke="#3ef03e" stroke-width="0.5" stroke-linejoin="round"/>
<polygon points="689.8,220.6 692.8,221.6 692.8,227.5 689.8,229.5" fill="#3ef03e" stroke="#3ef03e" stroke-width="0.5" stroke-linejoin="round"/>
<polygon points="700.8,211.0 697.8,213.0 697.8,218.9 700.8,219.9" fill="#3ef03e" stroke="#3ef03e" stroke-width="0.5" stroke-linejoin="round"/>
<polygon points="700.8,220.6 697.8,221.6 697.8,227.5 700.8,229.5" fill="#3ef03e" stroke="#3ef03e" stroke-width="0.5" stroke-linejoin="round"/>
<polygon points="690.5,220.2 692.8,218.8 697.8,218.8 700.0,220.2 697.8,221.8 692.8,221.8" fill="#1e6c1e"/>
<rect x="684.8" y="227.3" width="3.6" height="3.4" fill="#3ef03e"/>
<polygon points="603.4,241.0 612.6,241.0 610.2,244.0 605.8,244.0" fill="#1e6c1e"/>
<polygon points="603.4,261.5 612.6,261.5 610.2,258.5 605.8,258.5" fill="#1e6c1e"/>
<polygon points="602.5,242.0 605.5,244.0 605.5,249.9 602.5,250.9" fill="#1e6c1e"/>
<polygon points="602.5,251.6 605.5,252.6 605.5,258.5 602.5,260.5" fill="#1e6c1e"/>
<polygon points="613.5,242.0 610.5,244.0 610.5,249.9 613.5,250.9" fill="#1e6c1e"/>
<polygon points="613.5,251.6 610.5,252.6 610.5,258.5 613.5,260.5" fill="#1e6c1e"/>
<polygon points="603.2,251.2 605.5,249.8 610.5,249.8 612.8,251.2 610.5,252.8 605.5,252.8" fill="#1e6c1e"/>
<polygon points="620.9,241.0 630.1,241.0 627.7,244.0 623.2,244.0" fill="#1e6c1e"/>
<polygon points="620.9,261.5 630.1,261.5 627.7,258.5 623.2,258.5" fill="#1e6c1e"/>
<polygon points="620.0,242.0 623.0,244.0 623.0,249.9 620.0,250.9" fill="#1e6c1e"/>
<polygon points="620.0,251.6 623.0,252.6 623.0,258.5 620.0,260.5" fill="#1e6c1e"/>
<polygon points="631.0,242.0 628.0,244.0 628.0,249.9 631.0,250.9" fill="#1e6c1e"/>
<polygon points="631.0,251.6 628.0,252.6 628.0,258.5 631.0,260.5" fill="#1e6c1e"/>
<polygon points="620.7,251.2 623.0,249.8 628.0,249.8 630.2,251.2 628.0,252.8 623.0,252.8" fill="#1e6c1e"/>
<polygon points="638.3,241.0 647.5,241.0 645.1,244.0 640.7,244.0" fill="#1e6c1e"/>
<polygon points="638.3,261.5 647.5,261.5 645.1,258.5 640.7,258.5" fill="#1e6c1e"/>
<polygon points="637.4,242.0 640.4,244.0 640.4,249.9 637.4,250.9" fill="#1e6c1e"/>
<polygon points="637.4,251.6 640.4,252.6 640.4,258.5 637.4,260.5" fill="#1e6c1e"/>
<polygon points="648.4,242.0 645.4,244.0 645.4,249.9 648.4,250.9" fill="#1e6c1e"/>
<polygon points="648.4,251.6 645.4,252.6 645.4,258.5 648.4,260.5" fill="#1e6c1e"/>
<polygon points="638.1,251.2 640.4,249.8 645.4,249.8 647.7,251.2 645.4,252.8 640.4,252.8" fill="#1e6c1e"/>
<polygon points="655.8,241.0 665.0,241.0 662.6,244.0 658.1,244.0" fill="#1e6c1e"/>
<polygon points="655.8,261.5 665.0,261.5 662.6,258.5 658.1,258.5" fill="#1e6c1e"/>
<polygon points="654.9,242.0 657.9,244.0 657.9,249.9 654.9,250.9" fill="#1e6c1e"/>
<polygon points="654.9,251.6 657.9,252.6 657.9,258.5 654.9,260.5" fill="#1e6c1e"/>
<polygon points="665.9,242.0 662.9,244.0 662.9,249.9 665.9,250.9" fill="#1e6c1e"/>
<polygon points="665.9,251.6 662.9,252.6 662.9,258.5 665.9,260.5" fill="#1e6c1e"/>
<polygon points="655.6,251.2 657.9,249.8 662.9,249.8 665.1,251.2 662.9,252.8 657.9,252.8" fill="#1e6c1e"/>
<polygon points="673.2,241.0 682.4,241.0 680.0,244.0 675.6,244.0" fill="#3ef03e" stroke="#3ef03e" stroke-width="0.5" stroke-linejoin="round"/>
<polygon points="673.2,261.5 682.4,261.5 680.0,258.5 675.6,258.5" fill="#3ef03e" stroke="#3ef03e" stroke-width="0.5" stroke-linejoin="round"/>
<polygon points="672.3,242.0 675.3,244.0 675.3,249.9 672.3,250.9" fill="#3ef03e" stroke="#3ef03e" stroke-width="0.5" stroke-linejoin="round"/>
<polygon points="672.3,251.6 675.3,252.6 675.3,258.5 672.3,260.5" fill="#3ef03e" stroke="#3ef03e" stroke-width="0.5" stroke-linejoin="round"/>
<polygon points="683.3,242.0 680.3,244.0 680.3,249.9 683.3,250.9" fill="#3ef03e" stroke="#3ef03e" stroke-width="0.5" stroke-linejoin="round"/>
<polygon points="683.3,251.6 680.3,252.6 680.3,258.5 683.3,260.5" fill="#3ef03e" stroke="#3ef03e" stroke-width="0.5" stroke-linejoin="round"/>
<polygon points="673.0,251.2 675.3,249.8 680.3,249.8 682.6,251.2 680.3,252.8 675.3,252.8" fill="#1e6c1e"/>
<polygon points="690.6,241.0 699.9,241.0 697.5,244.0 693.0,244.0" fill="#3ef03e" stroke="#3ef03e" stroke-width="0.5" stroke-linejoin="round"/>
<polygon points="690.6,261.5 699.9,261.5 697.5,258.5 693.0,258.5" fill="#3ef03e" stroke="#3ef03e" stroke-width="0.5" stroke-linejoin="round"/>
<polygon points="689.8,242.0 692.8,244.0 692.8,249.9 689.8,250.9" fill="#3ef03e" stroke="#3ef03e" stroke-width="0.5" stroke-linejoin="round"/>
<polygon points="689.8,251.6 692.8,252.6 692.8,258.5 689.8,260.5" fill="#3ef03e" stroke="#3ef03e" stroke-width="0.5" stroke-linejoin="round"/>
<polygon points="700.8,242.0 697.8,244.0 697.8,249.9 700.8,250.9" fill="#3ef03e" stroke="#3ef03e" stroke-width="0.5" stroke-linejoin="round"/>
<polygon points="700.8,251.6 697.8,252.6 697.8,258.5 700.8,260.5" fill="#3ef03e" stroke="#3ef03e" stroke-width="0.5" stroke-linejoin="round"/>
<polygon points="690.5,251.2 692.8,249.8 697.8,249.8 700.0,251.2 697.8,252.8 692.8,252.8" fill="#1e6c1e"/>
<rect x="684.8" y="258.3" width="3.6" height="3.4" fill="#3ef03e"/>
<polygon points="603.4,272.0 612.6,272.0 610.2,275.0 605.8,275.0" fill="#1e6c1e"/>
<polygon points="603.4,292.5 612.6,292.5 610.2,289.5 605.8,289.5" fill="#1e6c1e"/>
<polygon points="602.5,273.0 605.5,275.0 605.5,280.9 602.5,281.9" fill="#1e6c1e"/>
<polygon points="602.5,282.6 605.5,283.6 605.5,289.5 602.5,291.5" fill="#1e6c1e"/>
<polygon points="613.5,273.0 610.5,275.0 610.5,280.9 613.5,281.9" fill="#1e6c1e"/>
<polygon points="613.5,282.6 610.5,283.6 610.5,289.5 613.5,291.5" fill="#1e6c1e"/>
<polygon points="603.2,282.2 605.5,280.8 610.5,280.8 612.8,282.2 610.5,283.8 605.5,283.8" fill="#1e6c1e"/>
<polygon points="620.9,272.0 630.1,272.0 627.7,275.0 623.2,275.0" fill="#1e6c1e"/>
<polygon points="620.9,292.5 630.1,292.5 627.7,289.5 623.2,289.5" fill="#1e6c1e"/>
<polygon points="620.0,273.0 623.0,275.0 623.0,280.9 620.0,281.9" fill="#1e6c1e"/>
<polygon points="620.0,282.6 623.0,283.6 623.0,289.5 620.0,291.5" fill="#1e6c1e"/>
<polygon points="631.0,273.0 628.0,275.0 628.0,280.9 631.0,281.9" fill="#1e6c1e"/>
<polygon points="631.0,282.6 628.0,283.6 628.0,289.5 631.0,291.5" fill="#1e6c1e"/>
<polygon points="620.7,282.2 623.0,280.8 628.0,280.8 630.2,282.2 628.0,283.8 623.0,283.8" fill="#1e6c1e"/>
<polygon points="638.3,272.0 647.5,272.0 645.1,275.0 640.7,275.0" fill="#1e6c1e"/>
<polygon points="638.3,292.5 647.5,292.5 645.1,289.5 640.7,289.5" fill="#1e6c1e"/>
<polygon points="637.4,273.0 640.4,275.0 640.4,280.9 637.4,281.9" fill="#1e6c1e"/>
<polygon points="637.4,282.6 640.4,283.6 640.4,289.5 637.4,291.5" fill="#1e6c1e"/>
<polygon points="648.4,273.0 645.4,275.0 645.4,280.9 648.4,281.9" fill="#1e6c1e"/>
<polygon points="648.4,282.6 645.4,283.6 645.4,289.5 648.4,291.5" fill="#1e6c1e"/>
<polygon points="638.1,282.2 640.4,280.8 645.4,280.8 647.7,282.2 645.4,283.8 640.4,283.8" fill="#1e6c1e"/>
<polygon points="655.8,272.0 665.0,272.0 662.6,275.0 658.1,275.0" fill="#1e6c1e"/>
<polygon points="655.8,292.5 665.0,292.5 662.6,289.5 658.1,289.5" fill="#1e6c1e"/>
<polygon points="654.9,273.0 657.9,275.0 657.9,280.9 654.9,281.9" fill="#1e6c1e"/>
<polygon points="654.9,282.6 657.9,283.6 657.9,289.5 654.9,291.5" fill="#1e6c1e"/>
<polygon points="665.9,273.0 662.9,275.0 662.9,280.9 665.9,281.9" fill="#1e6c1e"/>
<polygon points="665.9,282.6 662.9,283.6 662.9,289.5 665.9,291.5" fill="#1e6c1e"/>
<polygon points="655.6,282.2 657.9,280.8 662.9,280.8 665.1,282.2 662.9,283.8 657.9,283.8" fill="#1e6c1e"/>
<polygon points="673.2,272.0 682.4,272.0 680.0,275.0 675.6,275.0" fill="#3ef03e" stroke="#3ef03e" stroke-width="0.5" stroke-linejoin="round"/>
<polygon points="673.2,292.5 682.4,292.5 680.0,289.5 675.6,289.5" fill="#3ef03e" stroke="#3ef03e" stroke-width="0.5" stroke-linejoin="round"/>
<polygon points="672.3,273.0 675.3,275.0 675.3,280.9 672.3,281.9" fill="#3ef03e" stroke="#3ef03e" stroke-width="0.5" stroke-linejoin="round"/>
<polygon points="672.3,282.6 675.3,283.6 675.3,289.5 672.3,291.5" fill="#3ef03e" stroke="#3ef03e" stroke-width="0.5" stroke-linejoin="round"/>
<polygon points="683.3,273.0 680.3,275.0 680.3,280.9 683.3,281.9" fill="#3ef03e" stroke="#3ef03e" stroke-width="0.5" stroke-linejoin="round"/>
<polygon points="683.3,282.6 680.3,283.6 680.3,289.5 683.3,291.5" fill="#3ef03e" stroke="#3ef03e" stroke-width="0.5" stroke-linejoin="round"/>
<polygon points="673.0,282.2 675.3,280.8 680.3,280.8 682.6,282.2 680.3,283.8 675.3,283.8" fill="#1e6c1e"/>
<polygon points="690.6,272.0 699.9,272.0 697.5,275.0 693.0,275.0" fill="#3ef03e" stroke="#3ef03e" stroke-width="0.5" stroke-linejoin="round"/>
<polygon points="690.6,292.5 699.9,292.5 697.5,289.5 693.0,289.5" fill="#3ef03e" stroke="#3ef03e" stroke-width="0.5" stroke-linejoin="round"/>
<polygon points="689.8,273.0 692.8,275.0 692.8,280.9 689.8,281.9" fill="#3ef03e" stroke="#3ef03e" stroke-width="0.5" stroke-linejoin="round"/>
<polygon points="689.8,282.6 692.8,283.6 692.8,289.5 689.8,291.5" fill="#3ef03e" stroke="#3ef03e" stroke-width="0.5" stroke-linejoin="round"/>
<polygon points="700.8,273.0 697.8,275.0 697.8,280.9 700.8,281.9" fill="#3ef03e" stroke="#3ef03e" stroke-width="0.5" stroke-linejoin="round"/>
<polygon points="700.8,282.6 697.8,283.6 697.8,289.5 700.8,291.5" fill="#3ef03e" stroke="#3ef03e" stroke-width="0.5" stroke-linejoin="round"/>
<polygon points="690.5,282.2 692.8,280.8 697.8,280.8 700.0,282.2 697.8,283.8 692.8,283.8" fill="#1e6c1e"/>
<rect x="684.8" y="289.3" width="3.6" height="3.4" fill="#3ef03e"/>
<polygon points="603.4,303.0 612.6,303.0 610.2,306.0 605.8,306.0" fill="#1e6c1e"/>
<polygon points="603.4,323.5 612.6,323.5 610.2,320.5 605.8,320.5" fill="#1e6c1e"/>
<polygon points="602.5,304.0 605.5,306.0 605.5,311.9 602.5,312.9" fill="#1e6c1e"/>
<polygon points="602.5,313.6 605.5,314.6 605.5,320.5 602.5,322.5" fill="#1e6c1e"/>
<polygon points="613.5,304.0 610.5,306.0 610.5,311.9 613.5,312.9" fill="#1e6c1e"/>
<polygon points="613.5,313.6 610.5,314.6 610.5,320.5 613.5,322.5" fill="#1e6c1e"/>
<polygon points="603.2,313.2 605.5,311.8 610.5,311.8 612.8,313.2 610.5,314.8 605.5,314.8" fill="#1e6c1e"/>
<polygon points="620.9,303.0 630.1,303.0 627.7,306.0 623.2,306.0" fill="#1e6c1e"/>
<polygon points="620.9,323.5 630.1,323.5 627.7,320.5 623.2,320.5" fill="#1e6c1e"/>
<polygon points="620.0,304.0 623.0,306.0 623.0,311.9 620.0,312.9" fill="#1e6c1e"/>
<polygon points="620.0,313.6 623.0,314.6 623.0,320.5 620.0,322.5" fill="#1e6c1e"/>
<polygon points="631.0,304.0 628.0,306.0 628.0,311.9 631.0,312.9" fill="#1e6c1e"/>
<polygon points="631.0,313.6 628.0,314.6 628.0,320.5 631.0,322.5" fill="#1e6c1e"/>
<polygon points="620.7,313.2 623.0,311.8 628.0,311.8 630.2,313.2 628.0,314.8 623.0,314.8" fill="#1e6c1e"/>
<polygon points="638.3,303.0 647.5,303.0 645.1,306.0 640.7,306.0" fill="#1e6c1e"/>
<polygon points="638.3,323.5 647.5,323.5 645.1,320.5 640.7,320.5" fill="#1e6c1e"/>
<polygon points="637.4,304.0 640.4,306.0 640.4,311.9 637.4,312.9" fill="#1e6c1e"/>
<polygon points="637.4,313.6 640.4,314.6 640.4,320.5 637.4,322.5" fill="#1e6c1e"/>
<polygon points="648.4,304.0 645.4,306.0 645.4,311.9 648.4,312.9" fill="#1e6c1e"/>
<polygon points="648.4,313.6 645.4,314.6 645.4,320.5 648.4,322.5" fill="#1e6c1e"/>
<polygon points="638.1,313.2 640.4,311.8 645.4,311.8 647.7,313.2 645.4,314.8 640.4,314.8" fill="#1e6c1e"/>
<polygon points="655.8,303.0 665.0,303.0 662.6,306.0 658.1,306.0" fill="#1e6c1e"/>
<polygon points="655.8,323.5 665.0,323.5 662.6,320.5 658.1,320.5" fill="#1e6c1e"/>
<polygon points="654.9,304.0 657.9,306.0 657.9,311.9 654.9,312.9" fill="#1e6c1e"/>
<polygon points="654.9,313.6 657.9,314.6 657.9,320.5 654.9,322.5" fill="#1e6c1e"/>
<polygon points="665.9,304.0 662.9,306.0 662.9,311.9 665.9,312.9" fill="#1e6c1e"/>
<polygon points="665.9,313.6 662.9,314.6 662.9,320.5 665.9,322.5" fill="#1e6c1e"/>
<polygon points="655.6,313.2 657.9,311.8 662.9,311.8 665.1,313.2 662.9,314.8 657.9,314.8" fill="#1e6c1e"/>
<polygon points="673.2,303.0 682.4,303.0 680.0,306.0 675.6,306.0" fill="#3ef03e" stroke="#3ef03e" stroke-width="0.5" stroke-linejoin="round"/>
<polygon points="673.2,323.5 682.4,323.5 680.0,320.5 675.6,320.5" fill="#3ef03e" stroke="#3ef03e" stroke-width="0.5" stroke-linejoin="round"/>
<polygon points="672.3,304.0 675.3,306.0 675.3,311.9 672.3,312.9" fill="#3ef03e" stroke="#3ef03e" stroke-width="0.5" stroke-linejoin="round"/>
<polygon points="672.3,313.6 675.3,314.6 675.3,320.5 672.3,322.5" fill="#3ef03e" stroke="#3ef03e" stroke-width="0.5" stroke-linejoin="round"/>
<polygon points="683.3,304.0 680.3,306.0 680.3,311.9 683.3,312.9" fill="#3ef03e" stroke="#3ef03e" stroke-width="0.5" stroke-linejoin="round"/>
<polygon points="683.3,313.6 680.3,314.6 680.3,320.5 683.3,322.5" fill="#3ef03e" stroke="#3ef03e" stroke-width="0.5" stroke-linejoin="round"/>
<polygon points="673.0,313.2 675.3,311.8 680.3,311.8 682.6,313.2 680.3,314.8 675.3,314.8" fill="#1e6c1e"/>
<polygon points="690.6,303.0 699.9,303.0 697.5,306.0 693.0,306.0" fill="#3ef03e" stroke="#3ef03e" stroke-width="0.5" stroke-linejoin="round"/>
<polygon points="690.6,323.5 699.9,323.5 697.5,320.5 693.0,320.5" fill="#3ef03e" stroke="#3ef03e" stroke-width="0.5" stroke-linejoin="round"/>
<polygon points="689.8,304.0 692.8,306.0 692.8,311.9 689.8,312.9" fill="#3ef03e" stroke="#3ef03e" stroke-width="0.5" stroke-linejoin="round"/>
<polygon points="689.8,313.6 692.8,314.6 692.8,320.5 689.8,322.5" fill="#3ef03e" stroke="#3ef03e" stroke-width="0.5" stroke-linejoin="round"/>
<polygon points="700.8,304.0 697.8,306.0 697.8,311.9 700.8,312.9" fill="#3ef03e" stroke="#3ef03e" stroke-width="0.5" stroke-linejoin="round"/>
<polygon points="700.8,313.6 697.8,314.6 697.8,320.5 700.8,322.5" fill="#3ef03e" stroke="#3ef03e" stroke-width="0.5" stroke-linejoin="round"/>
<polygon points="690.5,313.2 692.8,311.8 697.8,311.8 700.0,313.2 697.8,314.8 692.8,314.8" fill="#1e6c1e"/>
<rect x="684.8" y="320.3" width="3.6" height="3.4" fill="#3ef03e"/>
<polygon points="603.4,334.0 612.6,334.0 610.2,337.0 605.8,337.0" fill="#1e6c1e"/>
<polygon points="603.4,354.5 612.6,354.5 610.2,351.5 605.8,351.5" fill="#1e6c1e"/>
<polygon points="602.5,335.0 605.5,337.0 605.5,342.9 602.5,343.9" fill="#1e6c1e"/>
<polygon points="602.5,344.6 605.5,345.6 605.5,351.5 602.5,353.5" fill="#1e6c1e"/>
<polygon points="613.5,335.0 610.5,337.0 610.5,342.9 613.5,343.9" fill="#1e6c1e"/>
<polygon points="613.5,344.6 610.5,345.6 610.5,351.5 613.5,353.5" fill="#1e6c1e"/>
<polygon points="603.2,344.2 605.5,342.8 610.5,342.8 612.8,344.2 610.5,345.8 605.5,345.8" fill="#1e6c1e"/>
<polygon points="620.9,334.0 630.1,334.0 627.7,337.0 623.2,337.0" fill="#1e6c1e"/>
<polygon points="620.9,354.5 630.1,354.5 627.7,351.5 623.2,351.5" fill="#1e6c1e"/>
<polygon points="620.0,335.0 623.0,337.0 623.0,342.9 620.0,343.9" fill="#1e6c1e"/>
<polygon points="620.0,344.6 623.0,345.6 623.0,351.5 620.0,353.5" fill="#1e6c1e"/>
<polygon points="631.0,335.0 628.0,337.0 628.0,342.9 631.0,343.9" fill="#1e6c1e"/>
<polygon points="631.0,344.6 628.0,345.6 628.0,351.5 631.0,353.5" fill="#1e6c1e"/>
<polygon points="620.7,344.2 623.0,342.8 628.0,342.8 630.2,344.2 628.0,345.8 623.0,345.8" fill="#1e6c1e"/>
<polygon points="638.3,334.0 647.5,334.0 645.1,337.0 640.7,337.0" fill="#1e6c1e"/>
<polygon points="638.3,354.5 647.5,354.5 645.1,351.5 640.7,351.5" fill="#1e6c1e"/>
<polygon points="637.4,335.0 640.4,337.0 640.4,342.9 637.4,343.9" fill="#1e6c1e"/>
<polygon points="637.4,344.6 640.4,345.6 640.4,351.5 637.4,353.5" fill="#1e6c1e"/>
<polygon points="648.4,335.0 645.4,337.0 645.4,342.9 648.4,343.9" fill="#1e6c1e"/>
<polygon points="648.4,344.6 645.4,345.6 645.4,351.5 648.4,353.5" fill="#1e6c1e"/>
<polygon points="638.1,344.2 640.4,342.8 645.4,342.8 647.7,344.2 645.4,345.8 640.4,345.8" fill="#1e6c1e"/>
<polygon points="655.8,334.0 665.0,334.0 662.6,337.0 658.1,337.0" fill="#1e6c1e"/>
<polygon points="655.8,354.5 665.0,354.5 662.6,351.5 658.1,351.5" fill="#1e6c1e"/>
<polygon points="654.9,335.0 657.9,337.0 657.9,342.9 654.9,343.9" fill="#1e6c1e"/>
<polygon points="654.9,344.6 657.9,345.6 657.9,351.5 654.9,353.5" fill="#1e6c1e"/>
<polygon points="665.9,335.0 662.9,337.0 662.9,342.9 665.9,343.9" fill="#1e6c1e"/>
<polygon points="665.9,344.6 662.9,345.6 662.9,351.5 665.9,353.5" fill="#1e6c1e"/>
<polygon points="655.6,344.2 657.9,342.8 662.9,342.8 665.1,344.2 662.9,345.8 657.9,345.8" fill="#1e6c1e"/>
<polygon points="673.2,334.0 682.4,334.0 680.0,337.0 675.6,337.0" fill="#3ef03e" stroke="#3ef03e" stroke-width="0.5" stroke-linejoin="round"/>
<polygon points="673.2,354.5 682.4,354.5 680.0,351.5 675.6,351.5" fill="#3ef03e" stroke="#3ef03e" stroke-width="0.5" stroke-linejoin="round"/>
<polygon points="672.3,335.0 675.3,337.0 675.3,342.9 672.3,343.9" fill="#3ef03e" stroke="#3ef03e" stroke-width="0.5" stroke-linejoin="round"/>
<polygon points="672.3,344.6 675.3,345.6 675.3,351.5 672.3,353.5" fill="#3ef03e" stroke="#3ef03e" stroke-width="0.5" stroke-linejoin="round"/>
<polygon points="683.3,335.0 680.3,337.0 680.3,342.9 683.3,343.9" fill="#3ef03e" stroke="#3ef03e" stroke-width="0.5" stroke-linejoin="round"/>
<polygon points="683.3,344.6 680.3,345.6 680.3,351.5 683.3,353.5" fill="#3ef03e" stroke="#3ef03e" stroke-width="0.5" stroke-linejoin="round"/>
<polygon points="673.0,344.2 675.3,342.8 680.3,342.8 682.6,344.2 680.3,345.8 675.3,345.8" fill="#1e6c1e"/>
<polygon points="690.6,334.0 699.9,334.0 697.5,337.0 693.0,337.0" fill="#3ef03e" stroke="#3ef03e" stroke-width="0.5" stroke-linejoin="round"/>
<polygon points="690.6,354.5 699.9,354.5 697.5,351.5 693.0,351.5" fill="#3ef03e" stroke="#3ef03e" stroke-width="0.5" stroke-linejoin="round"/>
<polygon points="689.8,335.0 692.8,337.0 692.8,342.9 689.8,343.9" fill="#3ef03e" stroke="#3ef03e" stroke-width="0.5" stroke-linejoin="round"/>
<polygon points="689.8,344.6 692.8,345.6 692.8,351.5 689.8,353.5" fill="#3ef03e" stroke="#3ef03e" stroke-width="0.5" stroke-linejoin="round"/>
<polygon points="700.8,335.0 697.8,337.0 697.8,342.9 700.8,343.9" fill="#3ef03e" stroke="#3ef03e" stroke-width="0.5" stroke-linejoin="round"/>
<polygon points="700.8,344.6 697.8,345.6 697.8,351.5 700.8,353.5" fill="#3ef03e" stroke="#3ef03e" stroke-width="0.5" stroke-linejoin="round"/>
<polygon points="690.5,344.2 692.8,342.8 697.8,342.8 700.0,344.2 697.8,345.8 692.8,345.8" fill="#1e6c1e"/>
<rect x="684.8" y="351.3" width="3.6" height="3.4" fill="#3ef03e"/>
<polygon points="603.4,365.0 612.6,365.0 610.2,368.0 605.8,368.0" fill="#1e6c1e"/>
<polygon points="603.4,385.5 612.6,385.5 610.2,382.5 605.8,382.5" fill="#1e6c1e"/>
<polygon points="602.5,366.0 605.5,368.0 605.5,373.9 602.5,374.9" fill="#1e6c1e"/>
<polygon points="602.5,375.6 605.5,376.6 605.5,382.5 602.5,384.5" fill="#1e6c1e"/>
<polygon points="613.5,366.0 610.5,368.0 610.5,373.9 613.5,374.9" fill="#1e6c1e"/>
<polygon points="613.5,375.6 610.5,376.6 610.5,382.5 613.5,384.5" fill="#1e6c1e"/>
<polygon points="603.2,375.2 605.5,373.8 610.5,373.8 612.8,375.2 610.5,376.8 605.5,376.8" fill="#1e6c1e"/>
<polygon points="620.9,365.0 630.1,365.0 627.7,368.0 623.2,368.0" fill="#1e6c1e"/>
<polygon points="620.9,385.5 630.1,385.5 627.7,382.5 623.2,382.5" fill="#1e6c1e"/>
<polygon points="620.0,366.0 623.0,368.0 623.0,373.9 620.0,374.9" fill="#1e6c1e"/>
<polygon points="620.0,375.6 623.0,376.6 623.0,382.5 620.0,384.5" fill="#1e6c1e"/>
<polygon points="631.0,366.0 628.0,368.0 628.0,373.9 631.0,374.9" fill="#1e6c1e"/>
<polygon points="631.0,375.6 628.0,376.6 628.0,382.5 631.0,384.5" fill="#1e6c1e"/>
<polygon points="620.7,375.2 623.0,373.8 628.0,373.8 630.2,375.2 628.0,376.8 623.0,376.8" fill="#1e6c1e"/>
<polygon points="638.3,365.0 647.5,365.0 645.1,368.0 640.7,368.0" fill="#1e6c1e"/>
<polygon points="638.3,385.5 647.5,385.5 645.1,382.5 640.7,382.5" fill="#1e6c1e"/>
<polygon points="637.4,366.0 640.4,368.0 640.4,373.9 637.4,374.9" fill="#1e6c1e"/>
<polygon points="637.4,375.6 640.4,376.6 640.4,382.5 637.4,384.5" fill="#1e6c1e"/>
<polygon points="648.4,366.0 645.4,368.0 645.4,373.9 648.4,374.9" fill="#1e6c1e"/>
<polygon points="648.4,375.6 645.4,376.6 645.4,382.5 648.4,384.5" fill="#1e6c1e"/>
<polygon points="638.1,375.2 640.4,373.8 645.4,373.8 647.7,375.2 645.4,376.8 640.4,376.8" fill="#1e6c1e"/>
<polygon points="655.8,365.0 665.0,365.0 662.6,368.0 658.1,368.0" fill="#1e6c1e"/>
<polygon points="655.8,385.5 665.0,385.5 662.6,382.5 658.1,382.5" fill="#1e6c1e"/>
<polygon points="654.9,366.0 657.9,368.0 657.9,373.9 654.9,374.9" fill="#1e6c1e"/>
<polygon points="654.9,375.6 657.9,376.6 657.9,382.5 654.9,384.5" fill="#1e6c1e"/>
<polygon points="665.9,366.0 662.9,368.0 662.9,373.9 665.9,374.9" fill="#1e6c1e"/>
<polygon points="665.9,375.6 662.9,376.6 662.9,382.5 665.9,384.5" fill="#1e6c1e"/>
<polygon points="655.6,375.2 657.9,373.8 662.9,373.8 665.1,375.2 662.9,376.8 657.9,376.8" fill="#1e6c1e"/>
<polygon points="673.2,365.0 682.4,365.0 680.0,368.0 675.6,368.0" fill="#3ef03e" stroke="#3ef03e" stroke-width="0.5" stroke-linejoin="round"/>
<polygon points="673.2,385.5 682.4,385.5 680.0,382.5 675.6,382.5" fill="#3ef03e" stroke="#3ef03e" stroke-width="0.5" stroke-linejoin="round"/>
<polygon points="672.3,366.0 675.3,368.0 675.3,373.9 672.3,374.9" fill="#3ef03e" stroke="#3ef03e" stroke-width="0.5" stroke-linejoin="round"/>
<polygon points="672.3,375.6 675.3,376.6 675.3,382.5 672.3,384.5" fill="#3ef03e" stroke="#3ef03e" stroke-width="0.5" stroke-linejoin="round"/>
<polygon points="683.3,366.0 680.3,368.0 680.3,373.9 683.3,374.9" fill="#3ef03e" stroke="#3ef03e" stroke-width="0.5" stroke-linejoin="round"/>
<polygon points="683.3,375.6 680.3,376.6 680.3,382.5 683.3,384.5" fill="#3ef03e" stroke="#3ef03e" stroke-width="0.5" stroke-linejoin="round"/>
<polygon points="673.0,375.2 675.3,373.8 680.3,373.8 682.6,375.2 680.3,376.8 675.3,376.8" fill="#1e6c1e"/>
<polygon points="690.6,365.0 699.9,365.0 697.5,368.0 693.0,368.0" fill="#3ef03e" stroke="#3ef03e" stroke-width="0.5" stroke-linejoin="round"/>
<polygon points="690.6,385.5 699.9,385.5 697.5,382.5 693.0,382.5" fill="#3ef03e" stroke="#3ef03e" stroke-width="0.5" stroke-linejoin="round"/>
<polygon points="689.8,366.0 692.8,368.0 692.8,373.9 689.8,374.9" fill="#3ef03e" stroke="#3ef03e" stroke-width="0.5" stroke-linejoin="round"/>
<polygon points="689.8,375.6 692.8,376.6 692.8,382.5 689.8,384.5" fill="#3ef03e" stroke="#3ef03e" stroke-width="0.5" stroke-linejoin="round"/>
<polygon points="700.8,366.0 697.8,368.0 697.8,373.9 700.8,374.9" fill="#3ef03e" stroke="#3ef03e" stroke-width="0.5" stroke-linejoin="round"/>
<polygon points="700.8,375.6 697.8,376.6 697.8,382.5 700.8,384.5" fill="#3ef03e" stroke="#3ef03e" stroke-width="0.5" stroke-linejoin="round"/>
<polygon points="690.5,375.2 692.8,373.8 697.8,373.8 700.0,375.2 697.8,376.8 692.8,376.8" fill="#1e6c1e"/>
<rect x="684.8" y="382.3" width="3.6" height="3.4" fill="#3ef03e"/>
<polygon points="729.0,105.5 744.0,122.5 736.8,122.5 736.8,136.5 721.2,136.5 721.2,122.5 714.0,122.5" fill="#0a860a" stroke="#b8b8b8" stroke-width="1.2"/>
<polygon points="729.0,365.0 744.0,348.0 736.8,348.0 736.8,334.0 721.2,334.0 721.2,348.0 714.0,348.0" fill="#0a860a" stroke="#b8b8b8" stroke-width="1.2"/>
</svg>
<!-- counters -->
<div class="a pan" style="left:574px;top:424px;width:193px;height:34px"></div>
<div class="a" style="left:593px;top:431px;width:66px;height:18px;background:#000;border:2px solid #6a6a6a;border-right-color:#9a9a9a;border-bottom-color:#9a9a9a"></div>
<div class="a" style="left:609.5px;top:433px;width:1.2px;height:14px;background:#c0c0c0"></div>
<div class="a" style="left:626.5px;top:433px;width:1.2px;height:14px;background:#c0c0c0"></div>
<div class="a" style="left:642.5px;top:433px;width:1.2px;height:14px;background:#c0c0c0"></div>
<div class="a cnt" style="left:595px;top:431px;color:#fff">0</div>
<div class="a cnt" style="left:611px;top:431px;color:#fff">0</div>
<div class="a cnt" style="left:628px;top:431px;color:#fff">0</div>
<div class="a cnt" style="left:644px;top:431px;color:#fff">1</div>
<div class="a" style="left:685px;top:433px;width:66px;height:17px;background:#1a857c"></div>
<div class="a" style="left:702px;top:434px;width:1.2px;height:15px;background:#d0f0ea"></div>
<div class="a" style="left:718px;top:434px;width:1.2px;height:15px;background:#d0f0ea"></div>
<div class="a" style="left:735px;top:434px;width:1.2px;height:15px;background:#d0f0ea"></div>
<div class="a cnt2" style="left:686px;top:433px">0</div>
<div class="a cnt2" style="left:703px;top:433px">0</div>
<div class="a cnt2" style="left:719px;top:433px">0</div>
<div class="a cnt2" style="left:736px;top:433px">0</div>


<!-- buttons -->
<div class="a" style="left:41px;top:472px;width:15px;height:6px;background:linear-gradient(#40e840,#28d028);box-shadow:inset 0 -1px 0 #20b020"></div>
<div class="a" style="left:283px;top:472px;width:15px;height:6px;background:#0c4c0c;border:1px solid #063806"><div style="position:absolute;left:1px;top:1px;width:4px;height:2px;background:#c8e8c8"></div></div>
<div class="a" style="left:531px;top:472px;width:15px;height:6px;background:#0c4c0c;border:1px solid #063806"><div style="position:absolute;left:1px;top:1px;width:4px;height:2px;background:#c8e8c8"></div></div>
<div class="a btn" style="left:18px;top:481px;width:59px"><span>DISCON</span></div>
<div class="a btn" style="left:79px;top:481px;width:58px"><span>SAVE</span></div>
<div class="a btn" style="left:140px;top:481px;width:58px"><span>LOAD</span></div>
<div class="a btn dis" style="left:200px;top:481px;width:58px"><span>PRINT</span></div>
<div class="a btn" style="left:261px;top:481px;width:58px"><span>LIMIT</span></div>
<div class="a btn dis" style="left:323px;top:481px;width:58px"><span>CLEAR</span></div>
<div class="a btn" style="left:386px;top:481px;width:57px"><span>READ</span></div>
<div class="a btn prs" style="left:448px;top:480px;width:57px;line-height:25px;padding-left:3px"><span>CONFIG</span></div>
<div class="a btn" style="left:510px;top:481px;width:57px"><span>START</span></div>

<!-- nav -->
<div class="a" style="left:585px;top:479px;width:177px;height:28px;background:#111"></div>
<div class="a navb" style="left:587px;top:481px;width:40px"></div>
<div class="a navb" style="left:629px;top:481px;width:42px"></div>
<div class="a navb" style="left:673px;top:481px;width:42px"></div>
<div class="a navb" style="left:717px;top:481px;width:43px"></div>
<svg class="a" style="left:0;top:0" width="800" height="565">
<g fill="#fafafa" stroke="#b8b8b8" stroke-width="0.7">
<rect x="601" y="489" width="2.2" height="9"/><path d="M611 489 L604 493.5 L611 498 Z"/>
<path d="M646 489 L639 493.5 L646 498 Z"/><path d="M653 489 L646 493.5 L653 498 Z"/>
<path d="M688 489 L695 493.5 L688 498 Z"/><path d="M695 489 L702 493.5 L695 498 Z"/>
<rect x="741" y="489" width="2.2" height="9"/><path d="M733 489 L740 493.5 L733 498 Z"/>
</g></svg>
<!-- status bar -->
<div class="a" style="left:9px;top:530.5px;width:779px;height:1.5px;background:#a0a0a0"></div>
<div class="a" style="left:19px;top:533.5px;font-size:12px;line-height:16px;color:#111;transform:scale(0.94,1.19);transform-origin:0 50%;white-space:nowrap">COM2 Connected</div>
<div class="a" style="left:175px;top:533px;width:1px;height:20px;background:#b0b0b0"></div>
<div class="a" style="left:735.5px;top:536px;width:10px;height:9.5px;background:#0c7c0c;border:1px solid #0a5a0a"></div>
<div class="a" style="left:752px;top:536px;width:10px;height:9.5px;background:#0c7c0c;border:1px solid #0a5a0a"></div>

<!-- dialog -->
<div class="a" style="left:191px;top:159px;width:416px;height:245px;background:#f2f2f2;border-left:2px solid #505050;border-top:1px solid #3a3a3a;border-right:2px solid #8cc4de;border-bottom:4px solid #3a8098;border-radius:5px 5px 0 0"></div>
<div class="a" style="left:193px;top:160px;width:412px;height:30px;background:linear-gradient(100deg,#d4e0ee 0%,#e0e9f4 30%,#d0deee 55%,#e2ebf5 75%,#d8e4f0 100%);border-bottom:1px solid #707070;border-radius:4px 4px 0 0;box-shadow:inset 1px 1px 0 #fff"></div>
<div class="a" style="left:200px;top:168.5px;font-size:13.8px;font-weight:bold;color:#111;line-height:18px;transform:scaleY(1.05)">Test Conditions</div>

<div class="a" style="left:210px;top:213px;width:218px;height:1px;background:#a8a8a8"></div>
<div class="a" style="left:210px;top:251px;width:218px;height:1px;background:#a8a8a8"></div>
<div class="a" style="left:214px;top:207px;padding:0 3px;background:#f2f2f2;font-family:'Liberation Mono',monospace;font-size:11px;color:#000;line-height:14px;transform:scaleY(1.22);-webkit-text-stroke:0.15px #000">Test Mode</div>
<div class="a" style="left:217px;top:227px;width:81px;height:20px;border:1.5px dotted #383838;background:#fafafa"></div>
<div class="a" style="left:218.5px;top:230.5px;width:13.5px;height:13.5px;border-radius:50%;border:1.6px solid #7a7a7a;background:radial-gradient(circle at 45% 40%,#3a90c0 0,#1a6898 2px,#185a88 3.5px,#dfe8f0 4.2px,#fff 6px)"></div>
<div class="a" style="left:237px;top:230px;font-size:12.5px;font-weight:bold;color:#4a90d8">Hardness</div>
<div class="a" style="left:321px;top:230px;width:13.5px;height:13.5px;border-radius:50%;border:1.6px solid #8a8a8a;background:radial-gradient(circle,#e8e8e8 0,#fff 6px)"></div>
<div class="a" style="left:339px;top:230px;font-size:12.5px;font-weight:bold;color:#4a90d8">Intensity</div>
<div class="a" style="left:468px;top:224px;font-size:13px;font-weight:bold;color:#000">OK</div>
<div class="a" style="left:542px;top:224px;font-size:13px;font-weight:bold;color:#000">Cancel</div>
<div class="a" style="left:211px;top:291px;font-family:'Liberation Serif',serif;font-size:12.2px;font-weight:bold;color:#000;-webkit-text-stroke:0.35px #000">Impact Dir:</div>
<div class="a" style="left:279px;top:290px;font-size:15.5px;color:#4a90d8;-webkit-text-stroke:0.35px #4a90d8">Down</div>
<div class="a" style="left:279px;top:309px;width:132px;height:1px;background:#a0a0a0"></div>
<div class="a" style="left:397px;top:297px;width:0;height:0;border-left:5px solid transparent;border-right:5px solid transparent;border-top:5px solid #000"></div>
<div class="a" style="left:211px;top:342px;font-family:'Liberation Serif',serif;font-size:12.2px;font-weight:bold;color:#000;-webkit-text-stroke:0.35px #000">Material:</div>
<div class="a" style="left:279px;top:341px;font-size:15.5px;color:#4a90d8;-webkit-text-stroke:0.35px #4a90d8;letter-spacing:0.6px">Steel</div>
<div class="a" style="left:279px;top:360.5px;width:132px;height:1.2px;background:#a0a0a0"></div>
<div class="a" style="left:397px;top:348px;width:0;height:0;border-left:5px solid transparent;border-right:5px solid transparent;border-top:5px solid #000"></div>
<div class="a" style="left:419px;top:291px;font-family:'Liberation Serif',serif;font-size:12.5px;font-weight:bold;color:#000;-webkit-text-stroke:0.35px #000">Average:</div>
<div class="a" style="left:523px;top:290px;font-size:15.5px;color:#4a90d8;-webkit-text-stroke:0.35px #4a90d8">7</div>
<div class="a" style="left:521px;top:310px;width:59px;height:1px;background:#a0a0a0"></div>
<div class="a" style="left:566px;top:297px;width:0;height:0;border-left:5px solid transparent;border-right:5px solid transparent;border-top:5px solid #000"></div>
<div class="a" style="left:419px;top:342px;font-family:'Liberation Serif',serif;font-size:12.5px;font-weight:bold;color:#000;-webkit-text-stroke:0.35px #000">Hardness System:</div>
<div class="a" style="left:523px;top:341px;font-size:15.5px;color:#4a90d8;-webkit-text-stroke:0.35px #4a90d8">HL</div>
<div class="a" style="left:521px;top:360.5px;width:59px;height:1.2px;background:#a0a0a0"></div>
<div class="a" style="left:566px;top:348px;width:0;height:0;border-left:5px solid transparent;border-right:5px solid transparent;border-top:5px solid #000"></div>
<svg class="a" style="left:0;top:0" width="800" height="565">
<defs><mask id="lm"><rect x="0" y="0" width="800" height="565" fill="#fff"/>
<path d="M 641.5 511 A 11 11 0 1 1 641 523" fill="none" stroke="#000" stroke-width="5.5"/>
<line x1="652" y1="517" x2="641" y2="526" stroke="#000" stroke-width="5.5"/>
</mask></defs>
<rect x="633" y="497" width="38" height="38" rx="7" fill="rgba(60,60,60,0.2)" mask="url(#lm)"/>
<g opacity="0.2"><text x="672" y="533.5" font-size="49" font-weight="bold" fill="#3c3c3c" stroke="#3c3c3c" stroke-width="3.2" stroke-linejoin="round" font-family="Liberation Sans" textLength="108" lengthAdjust="spacingAndGlyphs">&#1040;&#1053;&#1050;</text></g>
<g opacity="0.2"><text x="634" y="550.5" font-size="20" font-weight="bold" fill="#3c3c3c" stroke="#3c3c3c" stroke-width="1" font-family="Liberation Sans" textLength="150" lengthAdjust="spacingAndGlyphs">www.ank-nut.ru</text></g>
</svg>
</body></html>
